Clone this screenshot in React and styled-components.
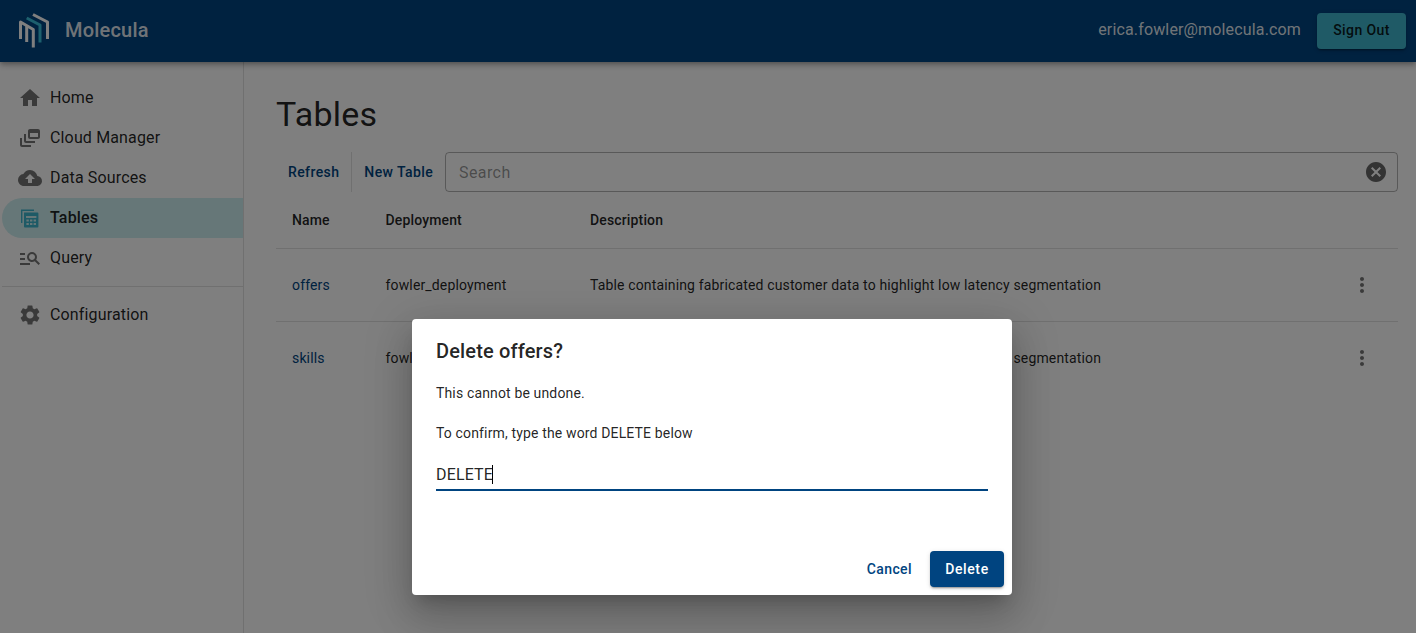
import React from 'react';
import styled, { createGlobalStyle } from 'styled-components';
import {
  MdHome,
  MdOutlineDynamicFeed,
  MdCloudUpload,
  MdManageSearch,
  MdSettings,
  MdCancel,
  MdMoreVert,
} from 'react-icons/md';

const GlobalStyle = createGlobalStyle`
  html, body {
    margin: 0;
    height: 100%;
    background: #fff;
    font-family: Roboto, "Liberation Sans", sans-serif;
    color: rgba(0, 0, 0, 0.87);
  }
  #root {
    height: 100%;
  }
`;

const Page = styled.div`
  position: relative;
  display: flex;
  flex-direction: column;
  height: 633px;
  overflow: hidden;
`;

const Header = styled.header`
  position: relative;
  z-index: 1;
  flex: none;
  display: flex;
  align-items: center;
  justify-content: space-between;
  height: 62px;
  padding: 0 10px 0 17px;
  background: #004480;
  color: rgba(255, 255, 255, 0.9);
  box-shadow: 0 2px 4px -1px rgba(0, 0, 0, 0.2), 0 4px 5px rgba(0, 0, 0, 0.14), 0 1px 10px rgba(0, 0, 0, 0.12);
`;

const Brand = styled.div`
  display: flex;
  align-items: center;
  gap: 15px;
  font-size: 20px;
  font-weight: 500;
  line-height: 22px;
  letter-spacing: 0.2px;

  span {
    margin-bottom: 2px;
  }
`;

const Account = styled.div`
  display: flex;
  align-items: center;
  gap: 16px;
`;

const Email = styled.span`
  margin-bottom: 3px;
  font-size: 16px;
  letter-spacing: 0.15px;
`;

const SignOut = styled.button`
  width: 89px;
  height: 36px;
  padding: 0 0 2px;
  border: none;
  border-radius: 4px;
  background: #3eb4cc;
  color: rgba(0, 0, 0, 0.87);
  font: 500 14px Roboto, sans-serif;
  letter-spacing: 0.4px;
  box-shadow: 0 3px 1px -2px rgba(0, 0, 0, 0.2), 0 2px 2px rgba(0, 0, 0, 0.14), 0 1px 5px rgba(0, 0, 0, 0.12);
`;

const Body = styled.div`
  flex: 1;
  display: flex;
  min-height: 0;
`;

const Sidebar = styled.nav`
  flex: none;
  box-sizing: border-box;
  width: 244px;
  padding-top: 16px;
  border-right: 1px solid rgba(0, 0, 0, 0.12);
`;

const NavItem = styled.div`
  display: flex;
  align-items: center;
  gap: 8px;
  height: 40px;
  margin-left: 2px;
  padding-left: 16px;
  border-radius: 20px 0 0 20px;
  background: ${p => (p.$active ? '#cdeef0' : 'transparent')};
  font-size: 16px;
  font-weight: ${p => (p.$active ? 500 : 400)};
  letter-spacing: 0.15px;

  svg {
    flex: none;
    width: 24px;
    height: 24px;
    color: ${p => (p.$active ? '#3cb4cc' : 'rgba(0, 0, 0, 0.54)')};
  }
`;

const NavLabel = styled.span`
  margin-bottom: 2px;
`;

const NavDivider = styled.hr`
  height: 1px;
  margin: 8px 0 8px 2px;
  border: none;
  background: rgba(0, 0, 0, 0.12);
`;

const Content = styled.main`
  flex: 1;
  min-width: 0;
  padding: 28px 18px 0 32px;
`;

const Title = styled.h1`
  margin: 0 0 14px;
  font-size: 34px;
  font-weight: 400;
  line-height: 48px;
  letter-spacing: 0.25px;
`;

const Toolbar = styled.div`
  display: flex;
  align-items: stretch;
  height: 40px;
`;

const TextButton = styled.button`
  flex: none;
  padding: 0 12px;
  border: none;
  background: none;
  color: #004480;
  font: 500 14px Roboto, sans-serif;
  letter-spacing: 0.4px;
`;

const ToolDivider = styled.span`
  flex: none;
  width: 1px;
  background: rgba(0, 0, 0, 0.12);
`;

const Search = styled.div`
  flex: 1;
  display: flex;
  align-items: center;
  justify-content: space-between;
  padding: 0 9px 0 13px;
  border: 1px solid rgba(0, 0, 0, 0.3);
  border-radius: 4px;
  color: rgba(0, 0, 0, 0.42);
  font-size: 16px;
  letter-spacing: 0.4px;

  svg {
    width: 24px;
    height: 24px;
    color: #666;
  }
`;

const Row = styled.div`
  display: grid;
  grid-template-columns: 109.5px 204.5px 1fr 72px;
  align-items: center;
  height: ${p => (p.$head ? '56px' : '72px')};
  border-bottom: 1px solid rgba(0, 0, 0, 0.12);
  font-size: 14px;
  font-weight: ${p => (p.$head ? 500 : 400)};
  letter-spacing: 0.15px;

  &:last-child {
    border-bottom: none;
  }

  > :first-child {
    padding-left: 16px;
  }
`;

const TableLink = styled.a`
  color: #004480;
`;

const RowMenu = styled.span`
  display: flex;
  justify-content: flex-end;
  padding-right: 24px;

  svg {
    width: 24px;
    height: 24px;
    color: rgba(0, 0, 0, 0.54);
  }
`;

const Backdrop = styled.div`
  position: absolute;
  inset: 0;
  z-index: 2;
  box-sizing: border-box;
  padding: 319px 0 0 412px;
  background: rgba(0, 0, 0, 0.5);
`;

const Dialog = styled.section`
  display: flex;
  flex-direction: column;
  box-sizing: border-box;
  width: 600px;
  height: 276px;
  padding: 20px 24px 8px;
  border-radius: 4px;
  background: #fff;
  box-shadow: 0 11px 15px -7px rgba(0, 0, 0, 0.2), 0 24px 38px 3px rgba(0, 0, 0, 0.14), 0 9px 46px 8px rgba(0, 0, 0, 0.12);
`;

const DialogTitle = styled.h2`
  margin: 0 0 20px;
  font-size: 20px;
  font-weight: 500;
  line-height: 24px;
  letter-spacing: 0.15px;
`;

const DialogText = styled.p`
  margin: 0 0 20px;
  font-size: 14px;
  line-height: 20px;
  letter-spacing: 0.15px;
`;

const Field = styled.div`
  display: flex;
  align-items: center;
  height: 29px;
  margin-top: -5px;
  padding-top: 2px;
  border-bottom: 2px solid #004480;
  font-size: 16px;
  letter-spacing: 0.15px;
`;

const Caret = styled.span`
  width: 1px;
  height: 19px;
  margin-left: -1px;
  background: #000;
`;

const Actions = styled.div`
  display: flex;
  align-items: center;
  justify-content: flex-end;
  gap: 6px;
  margin: auto -16px 0 0;
`;

const Primary = styled.button`
  width: 74px;
  height: 36px;
  border: none;
  border-radius: 4px;
  background: #004480;
  color: #fff;
  font: 500 14px Roboto, sans-serif;
  letter-spacing: 0.6px;
  box-shadow: 0 3px 1px -2px rgba(0, 0, 0, 0.2), 0 2px 2px rgba(0, 0, 0, 0.14), 0 1px 5px rgba(0, 0, 0, 0.12);
`;

const Logo = () => (
  <svg width="33" height="36" viewBox="0 0 33 36" fill="none" strokeWidth="3" strokeLinejoin="round">
    <path d="M3.5 26V9L16.3 16.5V34.5M9.7 12.5V29" stroke="#fff" />
    <path d="M9.7 5L23 12V29.5" stroke="#3ac0dc" />
    <path d="M16 1.5L30.5 9V26" stroke="#fff" />
  </svg>
);

const TablesIcon = () => (
  <svg viewBox="-1 -2 24 24" fill="currentColor">
    <path d="M2 1.5h13v1.4H3.4V15H2zM5 4.5h13.5a.9.9 0 0 1 .9.9v13.2a.9.9 0 0 1-.9.9H5.9a.9.9 0 0 1-.9-.9z" fillRule="evenodd" />
    <path d="M7 8h10.4v2H7zM7.4 11.5h2.4v2H7.4zM11 11.5h2.4v2H11zM14.6 11.5H17v2h-2.4zM7.4 15h2.4v2H7.4zM11 15h2.4v2H11zM14.6 15H17v2h-2.4z" fill="#cdeef0" />
  </svg>
);

const navItems = [
  { label: 'Home', icon: <MdHome /> },
  { label: 'Cloud Manager', icon: <MdOutlineDynamicFeed /> },
  { label: 'Data Sources', icon: <MdCloudUpload /> },
  { label: 'Tables', icon: <TablesIcon />, active: true },
  { label: 'Query', icon: <MdManageSearch /> },
];

const tables = [
  { name: 'offers', deployment: 'fowler_deployment' },
  { name: 'skills', deployment: 'fowler_deployment' },
];

const description = 'Table containing fabricated customer data to highlight low latency segmentation';

const App = () => (
  <Page>
    <GlobalStyle />
    <Header>
      <Brand>
        <Logo />
        <span>Molecula</span>
      </Brand>
      <Account>
        <Email>erica.fowler@molecula.com</Email>
        <SignOut>Sign Out</SignOut>
      </Account>
    </Header>
    <Body>
      <Sidebar>
        {navItems.map(item => (
          <NavItem key={item.label} $active={item.active}>
            {item.icon}
            <NavLabel>{item.label}</NavLabel>
          </NavItem>
        ))}
        <NavDivider />
        <NavItem>
          <MdSettings />
          <NavLabel>Configuration</NavLabel>
        </NavItem>
      </Sidebar>
      <Content>
        <Title>Tables</Title>
        <Toolbar>
          <TextButton>Refresh</TextButton>
          <ToolDivider />
          <TextButton>New Table</TextButton>
          <Search>
            Search
            <MdCancel />
          </Search>
        </Toolbar>
        <Row $head>
          <span>Name</span>
          <span>Deployment</span>
          <span>Description</span>
        </Row>
        {tables.map(table => (
          <Row key={table.name}>
            <TableLink>{table.name}</TableLink>
            <span>{table.deployment}</span>
            <span>{description}</span>
            <RowMenu>
              <MdMoreVert />
            </RowMenu>
          </Row>
        ))}
      </Content>
    </Body>
    <Backdrop>
      <Dialog>
        <DialogTitle>Delete offers?</DialogTitle>
        <DialogText>This cannot be undone.</DialogText>
        <DialogText>To confirm, type the word DELETE below</DialogText>
        <Field>
          DELETE
          <Caret />
        </Field>
        <Actions>
          <TextButton>Cancel</TextButton>
          <Primary>Delete</Primary>
        </Actions>
      </Dialog>
    </Backdrop>
  </Page>
);

export default App;
